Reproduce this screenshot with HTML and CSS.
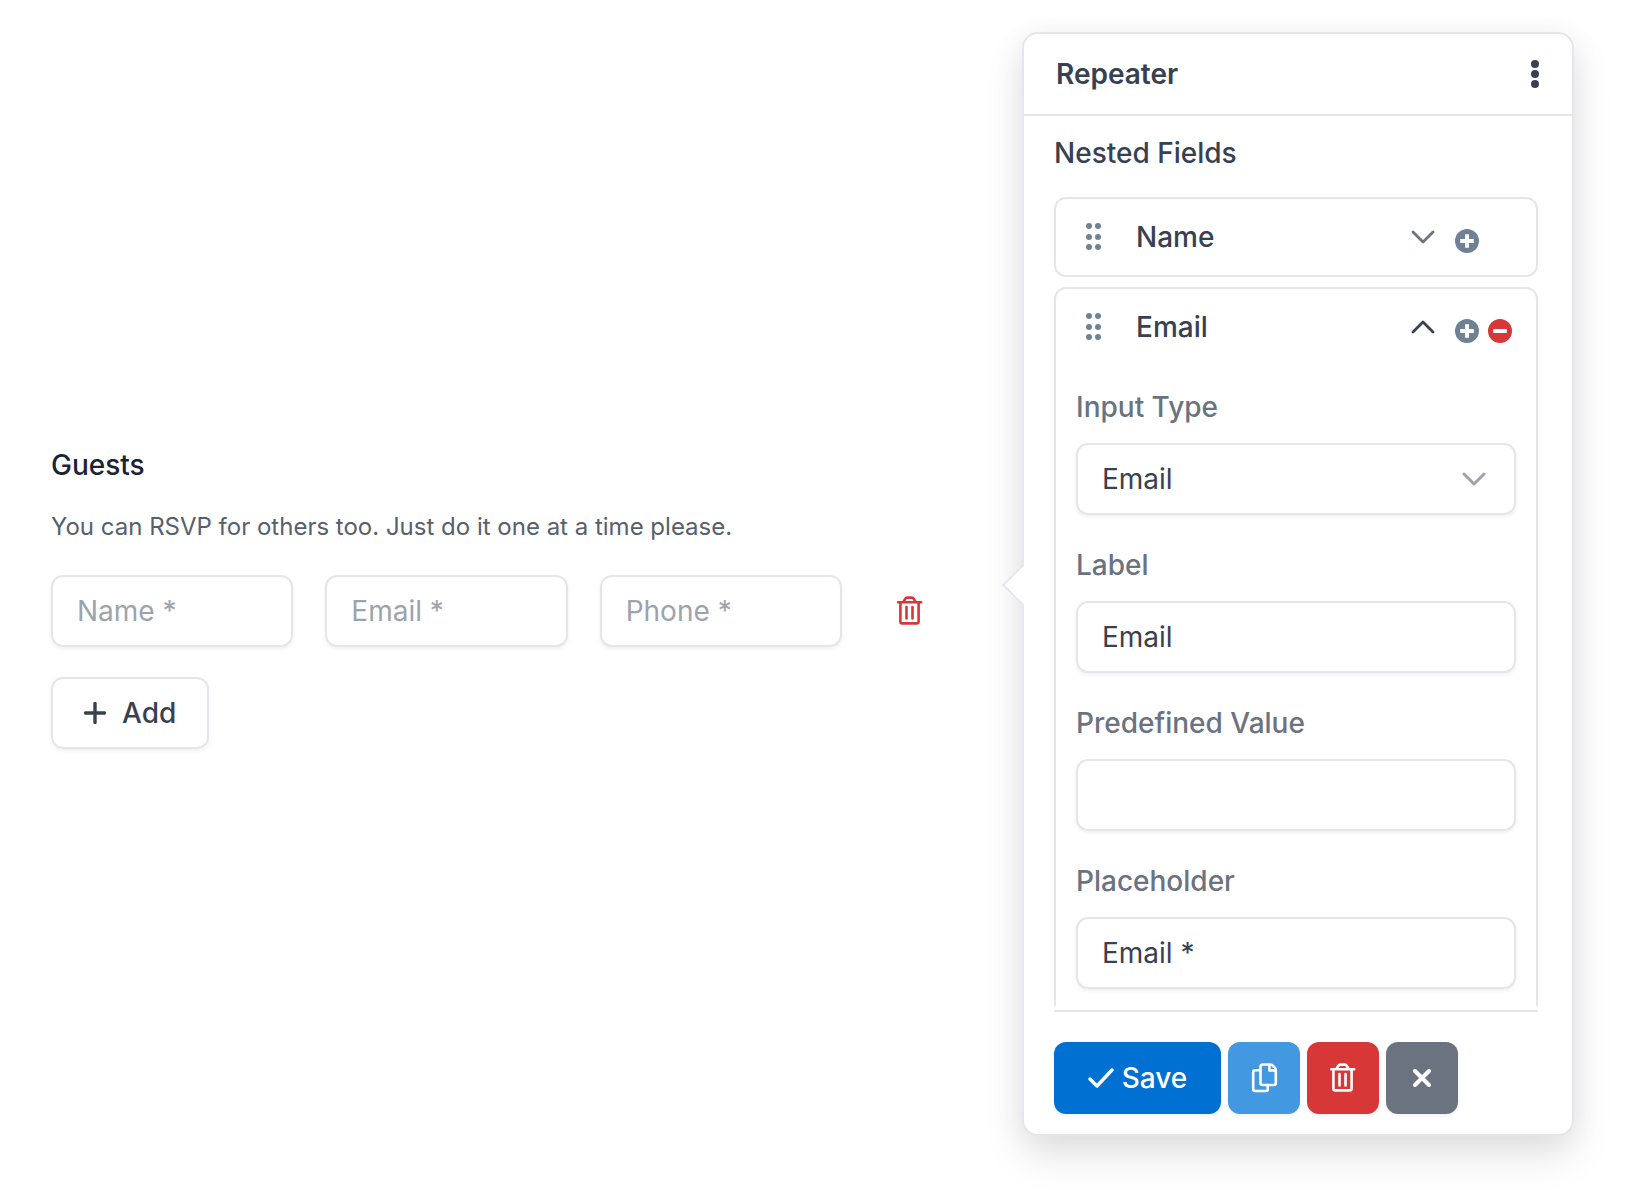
FILE: index.html
```html
<!DOCTYPE html>
<html lang="en">
<head>
    <meta charset="UTF-8">
    <meta name="viewport" content="width=device-width, initial-scale=1.0">
    <title>Repeater Field</title>
    <link rel="stylesheet" href="styles.css">
</head>
<body>
    <!-- Shared icons -->
    <svg class="sprite" aria-hidden="true">
        <symbol id="icon-trash" viewBox="0 0 28 32">
            <path d="M2.2 7.2H25.2M4.4 7.2V26.4a2 2 0 0 0 2 2H20.6a2 2 0 0 0 2-2V7.2M7.4 7L9 4.2Q9.8 2.6 11.4 2.6H15.6Q17.2 2.6 18 4.2L19.6 7M10.5 12V23.5M16.5 12V23.5"/>
        </symbol>
        <symbol id="icon-chevron" viewBox="0 0 24 14">
            <path d="M2 2L12 12L22 2"/>
        </symbol>
        <symbol id="icon-grip" viewBox="0 0 16 28">
            <circle cx="3" cy="3" r="3"/><circle cx="12" cy="3" r="3"/>
            <circle cx="3" cy="14" r="3"/><circle cx="12" cy="14" r="3"/>
            <circle cx="3" cy="24" r="3"/><circle cx="12" cy="24" r="3"/>
        </symbol>
        <symbol id="icon-plus-circle" viewBox="0 0 24 24">
            <circle cx="12" cy="12" r="12"/>
            <path d="M12 5.2V18.8M5.2 12H18.8" stroke="#fff" stroke-width="4"/>
        </symbol>
        <symbol id="icon-minus-circle" viewBox="0 0 24 24">
            <circle cx="12" cy="12" r="12"/>
            <path d="M5.2 12H18.8" stroke="#fff" stroke-width="4"/>
        </symbol>
    </svg>

    <div class="builder">
        <form class="guests">
            <h2 class="guests-title">Guests</h2>
            <p class="guests-help">You can RSVP for others too. Just do it one at a time please.</p>
            <div class="guest-row">
                <input class="control" type="text" placeholder="Name *" aria-label="Name">
                <input class="control" type="email" placeholder="Email *" aria-label="Email">
                <input class="control" type="tel" placeholder="Phone *" aria-label="Phone">
                <button class="btn-remove" type="button" aria-label="Remove guest">
                    <svg class="icon-line"><use href="#icon-trash"/></svg>
                </button>
            </div>
            <button class="btn-add" type="button">
                <svg class="icon-add" viewBox="0 0 22 22"><path d="M11 1.5V20.5M1.5 11H20.5"/></svg>
                Add
            </button>
        </form>

        <section class="popover">
            <header class="popover-header">
                <h2 class="popover-title">Repeater</h2>
                <button class="btn-menu" type="button" aria-label="More options">
                    <svg class="icon-dots" viewBox="0 0 8 28">
                        <circle cx="4" cy="4" r="4"/><circle cx="4" cy="14" r="4"/><circle cx="4" cy="24" r="4"/>
                    </svg>
                </button>
            </header>

            <div class="popover-body">
                <h3 class="section-title">Nested Fields</h3>

                <div class="card">
                    <div class="card-head">
                        <svg class="icon-grip"><use href="#icon-grip"/></svg>
                        <span class="card-name">Name</span>
                        <button class="btn-icon btn-toggle" type="button" aria-label="Expand Name">
                            <svg class="icon-chevron"><use href="#icon-chevron"/></svg>
                        </button>
                        <button class="btn-icon btn-circle" type="button" aria-label="Add field after Name">
                            <svg class="icon-circle"><use href="#icon-plus-circle"/></svg>
                        </button>
                        <span class="circle-spacer"></span>
                    </div>
                </div>

                <div class="card">
                    <div class="card-head">
                        <svg class="icon-grip"><use href="#icon-grip"/></svg>
                        <span class="card-name">Email</span>
                        <button class="btn-icon btn-toggle open" type="button" aria-label="Collapse Email">
                            <svg class="icon-chevron"><use href="#icon-chevron"/></svg>
                        </button>
                        <button class="btn-icon btn-circle" type="button" aria-label="Add field after Email">
                            <svg class="icon-circle"><use href="#icon-plus-circle"/></svg>
                        </button>
                        <button class="btn-icon btn-circle danger" type="button" aria-label="Remove Email">
                            <svg class="icon-circle"><use href="#icon-minus-circle"/></svg>
                        </button>
                    </div>
                    <div class="card-body">
                        <div class="field">
                            <label for="inputType">Input Type</label>
                            <div class="select-wrap">
                                <select class="control" id="inputType">
                                    <option>Text</option>
                                    <option selected>Email</option>
                                    <option>Phone</option>
                                </select>
                                <svg class="icon-chevron select-arrow"><use href="#icon-chevron"/></svg>
                            </div>
                        </div>
                        <div class="field">
                            <label for="fieldLabel">Label</label>
                            <input class="control" type="text" id="fieldLabel" value="Email">
                        </div>
                        <div class="field">
                            <label for="fieldValue">Predefined Value</label>
                            <input class="control" type="text" id="fieldValue">
                        </div>
                        <div class="field">
                            <label for="fieldPlaceholder">Placeholder</label>
                            <input class="control" type="text" id="fieldPlaceholder" value="Email *">
                        </div>
                    </div>
                </div>
            </div>

            <footer class="popover-footer">
                <button class="btn btn-save" type="button">
                    <svg class="icon-check" viewBox="0 0 26 20"><path d="M2 11L9 18L24 2"/></svg>
                    Save
                </button>
                <button class="btn btn-copy" type="button" aria-label="Duplicate">
                    <svg class="icon-line" viewBox="0 0 28 32">
                        <path d="M20 2.5H12.5a2 2 0 0 0-2 2V21a2 2 0 0 0 2 2H23.8a2 2 0 0 0 2-2V8Q25.8 6.6 24.8 5.6L22.6 3.4Q21.6 2.5 20 2.5ZM19.4 2.8V8.4H25.4M10 8.2H5.2a2 2 0 0 0-2 2V27a2 2 0 0 0 2 2H15.8a2 2 0 0 0 2-2V23.4"/>
                    </svg>
                </button>
                <button class="btn btn-delete" type="button" aria-label="Delete">
                    <svg class="icon-line"><use href="#icon-trash"/></svg>
                </button>
                <button class="btn btn-close" type="button" aria-label="Close">
                    <svg class="icon-close" viewBox="0 0 18 18"><path d="M2 2L16 16M16 2L2 16"/></svg>
                </button>
            </footer>
        </section>
    </div>
</body>
</html>
```
FILE: styles.css
```css
* {
    margin: 0;
    padding: 0;
    box-sizing: border-box;
}

body {
    font-family: Inter, 'Liberation Sans', sans-serif;
    font-size: 28px;
    line-height: 40px;
    color: #374151;
    background: #fff;
}

button,
input,
select {
    font: inherit;
    color: inherit;
}

button {
    border: none;
    background: none;
    cursor: pointer;
}

svg {
    display: block;
    fill: none;
    stroke-linecap: round;
    stroke-linejoin: round;
}

.sprite {
    position: absolute;
    width: 0;
    height: 0;
}

.builder {
    display: grid;
    grid-template-columns: 1fr 552px;
    gap: 76px;
    align-items: center;
    padding: 32px 66px 54px 51px;
}

.control {
    display: block;
    width: 100%;
    min-width: 0;
    height: 72px;
    padding: 0 24px;
    border: 2px solid #e5e6eb;
    border-radius: 12px;
    background: #fff;
    box-shadow: 0 2px 4px rgba(0, 0, 0, 0.06);
    appearance: none;
}

.control::placeholder {
    color: #9ca3af;
    opacity: 1;
}

/* Form preview */
.guests {
    padding-top: 26px;
}

.guests-title {
    font-size: 28px;
    font-weight: 500;
    color: #1a2336;
    margin-bottom: 24px;
}

.guests-help {
    font-size: 24px;
    line-height: 36px;
    color: #56606c;
    margin-bottom: 30px;
}

.guest-row {
    display: grid;
    grid-template-columns: 1fr 1fr 1fr 72px;
    gap: 32px;
    margin-bottom: 30px;
}

.btn-remove {
    display: flex;
    align-items: center;
    justify-content: center;
    color: #d73737;
}

.btn-add {
    display: flex;
    align-items: center;
    gap: 16px;
    height: 72px;
    padding: 0 31px;
    border: 2px solid #e5e6eb;
    border-radius: 12px;
    box-shadow: 0 2px 4px rgba(0, 0, 0, 0.06);
    font-weight: 500;
}

/* Field settings popover */
.popover {
    position: relative;
    border: 2px solid #e5e6eb;
    border-radius: 16px;
    background: #fff;
    box-shadow: 0 20px 40px rgba(0, 0, 0, 0.1), 0 4px 32px rgba(0, 0, 0, 0.06);
}

.popover::before {
    content: "";
    position: absolute;
    top: 50%;
    left: -16px;
    width: 28px;
    height: 28px;
    margin-top: -14px;
    border: solid #e5e6eb;
    border-width: 0 0 2px 2px;
    background: #fff;
    transform: rotate(45deg);
}

.popover-header {
    display: flex;
    align-items: center;
    justify-content: space-between;
    height: 82px;
    padding: 0 33px 0 32px;
    border-bottom: 2px solid #e5e6eb;
}

.popover-title {
    font-size: 28px;
    font-weight: 600;
}

.btn-menu {
    padding: 4px 0;
}

.popover-body {
    position: relative;
    max-height: 890px;
    padding: 17px 34px 0 30px;
    overflow-y: auto;
    scrollbar-width: none;
}

.section-title {
    font-size: 28px;
    font-weight: 500;
    margin-bottom: 24px;
}

.card {
    border: 2px solid #e5e6eb;
    border-radius: 12px;
    margin-bottom: 10px;
}

.card-head {
    display: flex;
    align-items: center;
    height: 76px;
    padding: 0 24px 0 30px;
}

.card-name {
    flex: 1;
    margin-left: 34px;
    font-weight: 500;
}

.btn-toggle {
    margin-right: 20px;
    color: #6b7280;
}

.btn-toggle.open {
    color: #374151;
}

.btn-toggle.open svg {
    transform: rotate(180deg);
}

.btn-circle {
    padding-top: 7px;
    color: #6f8293;
}

.btn-circle.danger {
    color: #d73737;
}

.btn-circle + .btn-circle {
    margin-left: 9px;
}

.circle-spacer {
    width: 33px;
}

.card-body {
    padding: 22px 20px 2px;
}

.field {
    margin-bottom: 30px;
}

.field label {
    display: block;
    margin-bottom: 16px;
    font-weight: 500;
    color: #6b7280;
}

.select-wrap {
    position: relative;
}

.select-arrow {
    position: absolute;
    top: 29px;
    right: 30px;
    color: #9ca3af;
    pointer-events: none;
}

.popover-footer {
    display: flex;
    gap: 7px;
    margin: 4px 34px 0 30px;
    padding: 30px 0 20px;
    border-top: 2px solid #e5e6eb;
}

.btn {
    display: flex;
    align-items: center;
    justify-content: center;
    width: 72px;
    height: 72px;
    border-radius: 12px;
    box-shadow: 0 2px 4px rgba(0, 0, 0, 0.06);
    font-weight: 500;
    color: #fff;
}

.btn-save {
    gap: 8px;
    width: 167px;
    background: #0070d2;
}

.btn-copy {
    background: #4299e1;
}

.btn-delete {
    background: #d73737;
}

.btn-close {
    background: #6b7280;
}

/* Icons */
.icon-line {
    width: 28px;
    height: 32px;
    stroke: currentColor;
    stroke-width: 2.6;
}

.icon-chevron {
    width: 24px;
    height: 14px;
    stroke: currentColor;
    stroke-width: 2.8;
}

.select-arrow {
    stroke-width: 3;
}

.icon-grip {
    width: 16px;
    height: 28px;
    fill: #6f8293;
}

.icon-circle {
    width: 24px;
    height: 24px;
    fill: currentColor;
    stroke-linecap: butt;
}

.icon-dots {
    width: 8px;
    height: 28px;
    fill: #374151;
}

.icon-add {
    width: 22px;
    height: 22px;
    stroke: currentColor;
    stroke-width: 3.4;
}

.icon-check {
    width: 26px;
    height: 20px;
    stroke: currentColor;
    stroke-width: 3.4;
}

.icon-close {
    width: 18px;
    height: 18px;
    stroke: currentColor;
    stroke-width: 4;
}
```
